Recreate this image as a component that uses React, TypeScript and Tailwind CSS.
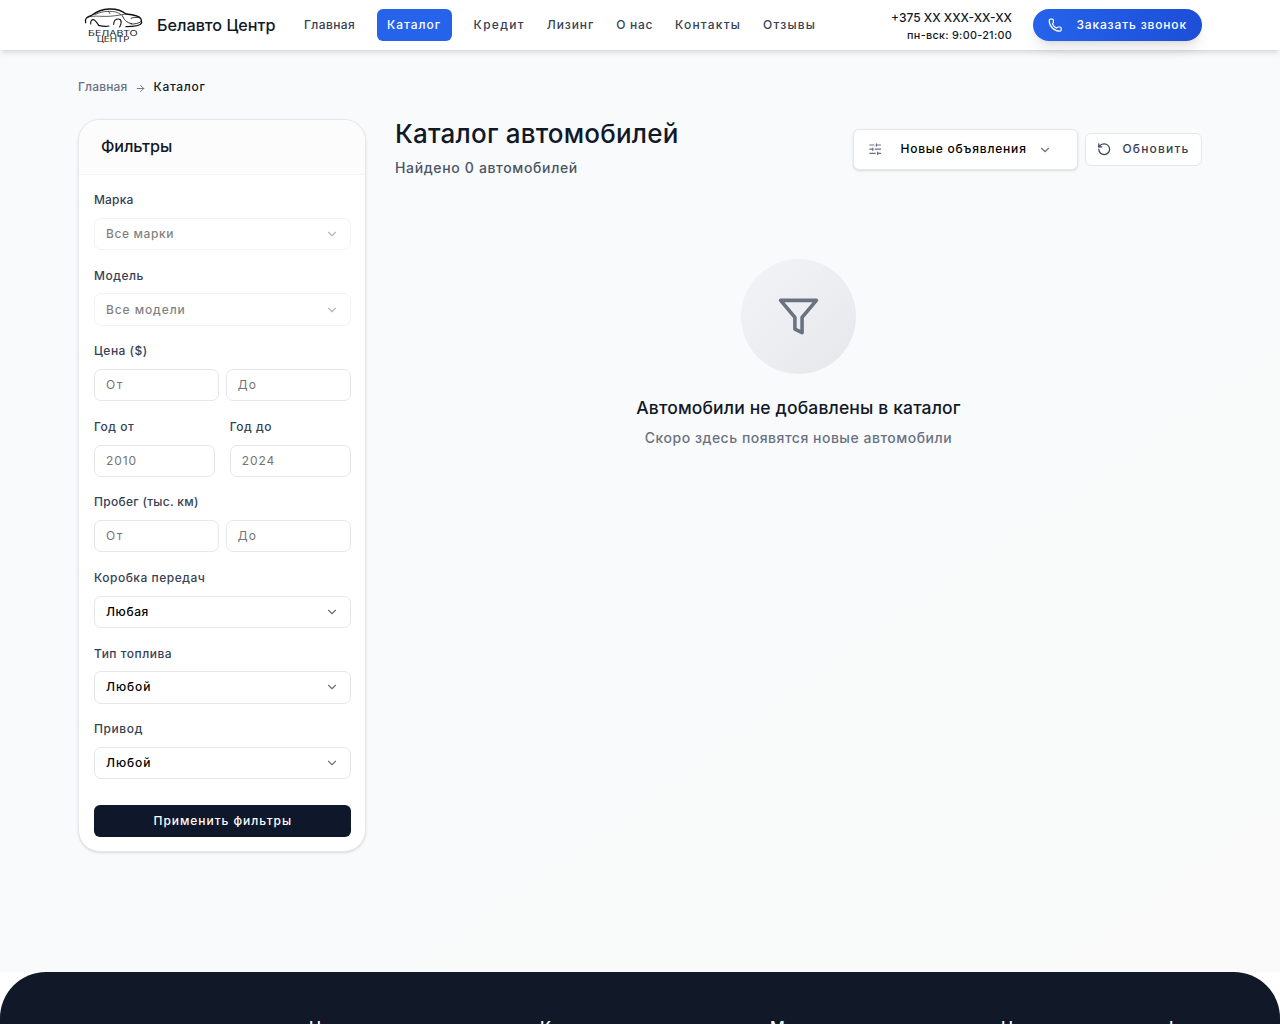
import type { ReactNode } from "react";
import { ArrowRight, ChevronDown, Phone, RotateCcw, SlidersHorizontal } from "lucide-react";

function T({ children, className = "" }: { children: ReactNode; className?: string }) {
  return <span className={"inline-block whitespace-nowrap " + className}>{children}</span>;
}

function Logo() {
  return (
    <svg viewBox="40 20 180 110" className="h-[36.67px] w-[60px] shrink-0" fill="none" stroke="#111" strokeLinecap="round">
      <path d="M48 67C44 56 52 49 66 45C82 33 97 27 118 26C142 25 157 31 169 41C190 43 210 46 214 56L216 68C212 76 198 79 169 79" strokeWidth="4" />
      <path d="M76 43C90 36 102 33 116 33C134 32 146 36 154 43M116 33L121 40" strokeWidth="2" />
      <path d="M52 51C79 43 98 52 138 46C153 44 162 42 169 41" strokeWidth="2" />
      <path d="M86 75C98 78 108 79 118 77M63 71C62 61 67 56 74 59C80 63 82 69 88 75M132 72C132 61 139 55 147 56C157 57 156 70 150 80" strokeWidth="3.4" />
      <path d="M184 54C190 51 200 50 208 52M184 71C195 72 206 69 214 64M158 46C163 58 170 67 186 70" strokeWidth="2.6" />
      <g fill="#222" stroke="none" fontFamily="Inter" fontSize="22">
        <text x="55" y="106" textLength="149" lengthAdjust="spacingAndGlyphs">БЕЛАВТО</text>
        <text x="81" y="126" textLength="99" lengthAdjust="spacingAndGlyphs">ЦЕНТР</text>
      </g>
    </svg>
  );
}

const label = "mb-[8.7px] flex h-[19.5px] items-end text-[12px] font-medium leading-[18px] text-gray-700";
const box = "flex h-[32.4px] min-w-0 flex-1 items-center rounded-[7px] border border-gray-200 bg-white px-[11px] text-[12px]";

function Select({ title, value, disabled = false }: { title: ReactNode; value: ReactNode; disabled?: boolean }) {
  return (
    <div>
      <div className={label}>{title}</div>
      <div className={box + " justify-between font-medium text-black" + (disabled ? " opacity-50" : "")}>
        {value}
        <ChevronDown size={14} className="text-gray-500" />
      </div>
    </div>
  );
}

function Input({ children }: { children: ReactNode }) {
  return <div className={box + " text-[#757575]"}>{children}</div>;
}

function Range() {
  return (
    <div className="flex gap-[7px]">
      <Input><T className="tracking-[1.6px]">От</T></Input>
      <Input><T className="tracking-[1px]">До</T></Input>
    </div>
  );
}

export default function App() {
  return (
    <div className="flex h-[1024px] flex-col overflow-hidden bg-white font-['Inter',sans-serif] text-[#111827]">
      <header className="relative z-10 flex h-[50px] shrink-0 items-center bg-white pl-[83px] pr-[78px] shadow-md">
        <Logo />
        <div className="ml-[14px] w-[133px] text-[16.2px] font-medium"><T>Белавто Центр</T></div>
        <nav className="flex flex-1 items-center pb-px text-[12px] font-medium text-gray-700">
          <div className="w-[87px] pl-[14px]"><T className="tracking-[0.4px]">Главная</T></div>
          <div className="-mb-px flex h-8 w-[75px] items-center rounded-md bg-[#2563eb] pb-px pl-[10px] text-white"><T className="tracking-[1px]">Каталог</T></div>
          <div className="ml-[21.6px] flex gap-[22px]">
            <T className="tracking-[1.3px]">Кредит</T>
            <T className="tracking-[0.9px]">Лизинг</T>
            <T className="tracking-[0.7px]">О нас</T>
            <T className="tracking-[1.2px]">Контакты</T>
            <T className="tracking-[1.2px]">Отзывы</T>
          </div>
        </nav>
        <div className="mr-[21px] flex flex-col items-end pt-[3px] font-medium">
          <T className="text-[12px] leading-[18px]">+375 XX XXX-XX-XX</T>
          <T className="text-[10.8px] leading-[18px] tracking-[0.3px]">пн-вск: 9:00-21:00</T>
        </div>
        <div className="flex h-8 w-[169px] items-center gap-[14px] rounded-full bg-linear-to-r/srgb from-[#2563eb] to-[#1d4ed8] pl-[15px] text-[12px] font-medium text-white shadow-lg">
          <Phone size={14.4} className="shrink-0" /><T className="pb-px tracking-[0.85px]">Заказать звонок</T>
        </div>
      </header>
      <main className="h-[922px] shrink-0 bg-linear-to-br/srgb from-[#f8fafc] to-[#fafafa] px-[78px] pt-[28px]">
        <div className="flex h-[18px] items-center text-[12px] font-medium">
          <T className="tracking-[0.15px] text-gray-500">Главная</T>
          <ArrowRight size={11} className="ml-2 mr-[7px] mt-[2px] text-gray-500" />
          <T className="tracking-[0.7px]">Каталог</T>
        </div>
        <div className="mt-[23px] flex gap-[29px]">
          <aside className="w-[288px] shrink-0 rounded-[22px] border border-gray-200 bg-white shadow-sm">
            <div className="flex h-[55px] items-center rounded-t-[21px] border-b border-gray-100 bg-[#fcfcfd] px-[22px] pb-[2px] text-[16.2px] font-medium"><T className="-tracking-[0.1px]">Фильтры</T></div>
            <div className="flex flex-col gap-[15px] pb-[13.6px] pl-[15px] pr-[14.4px] pt-[14.6px]">
              <Select title={<T className="tracking-[0.15px]">Марка</T>} value={<T className="tracking-[0.6px]">Все марки</T>} disabled />
              <Select title={<T className="tracking-[0.5px]">Модель</T>} value={<T className="tracking-[0.9px]">Все модели</T>} disabled />
              <div><div className={label}><T className="tracking-[0.5px]">Цена ($)</T></div><Range /></div>
              <div className="flex gap-[15px]">
                <div className="flex-1"><div className={label}><T className="tracking-[0.5px]">Год от</T></div><div className="flex"><Input><T className="tracking-[0.9px]">2010</T></Input></div></div>
                <div className="flex-1"><div className={label}><T className="tracking-[0.5px]">Год до</T></div><div className="flex"><Input><T className="tracking-[0.9px]">2024</T></Input></div></div>
              </div>
              <div><div className={label}><T className="tracking-[0.3px]">Пробег (тыс. км)</T></div><Range /></div>
              <Select title={<T className="tracking-[0.5px]">Коробка передач</T>} value={<T className="tracking-[0.6px]">Любая</T>} />
              <Select title={<T className="tracking-[0.5px]">Тип топлива</T>} value={<T className="tracking-[0.9px]">Любой</T>} />
              <Select title={<T className="tracking-[0.6px]">Привод</T>} value={<T className="tracking-[0.9px]">Любой</T>} />
              <div className="mt-[10.4px] flex h-[32.4px] items-center justify-center rounded-md bg-[#0f172a] text-[12px] font-medium text-white"><T className="pl-px tracking-[0.95px]">Применить фильтры</T></div>
            </div>
          </aside>
          <section className="min-w-0 flex-1">
            <div className="flex h-[61px] items-center justify-between">
              <div>
                <h1 className="text-[26px] font-medium leading-[28px]"><T className="tracking-[0.2px]">Каталог автомобилей</T></h1>
                <p className="mt-[9px] text-[14px] font-medium leading-[22px] text-gray-600"><T className="tracking-[0.65px]">Найдено 0 автомобилей</T></p>
              </div>
              <div className="flex items-center gap-[7px] text-[12px] font-medium">
                <div className="flex h-[41px] w-[225px] items-center rounded-md border border-gray-200 bg-white pl-[14px] text-black shadow-sm">
                  <SlidersHorizontal size={14.4} className="mr-[18px] text-gray-500" /><T className="pb-px tracking-[0.8px]">Новые объявления</T><ChevronDown size={14} className="ml-[11px] text-gray-500" />
                </div>
                <div className="flex h-[33px] w-[117px] items-center rounded-md border border-gray-200 bg-white pl-[11px] text-gray-700">
                  <RotateCcw size={14.4} className="mr-[11px]" /><T className="pb-px tracking-[1.2px]">Обновить</T>
                </div>
              </div>
            </div>
            <div className="mt-[79px] flex flex-col items-center">
              <div className="flex size-[115px] items-center justify-center rounded-full bg-linear-to-br/srgb from-gray-100 to-gray-200">
                <svg viewBox="0 0 24 24" className="size-[43px] text-gray-500" fill="none" stroke="currentColor" strokeWidth="2" strokeLinecap="round" strokeLinejoin="round"><path d="M22 3H2L10 12.46V19L14 21V12.46Z" /></svg>
              </div>
              <h2 className="mt-[21px] text-[17.5px] font-medium leading-[26px]"><T className="tracking-[0.15px]">Автомобили не добавлены в каталог</T></h2>
              <p className="mt-[6px] text-[14px] font-medium leading-[22px] text-gray-500"><T className="tracking-[0.5px]">Скоро здесь появятся новые автомобили</T></p>
            </div>
          </section>
        </div>
      </main>
      <footer className="h-[100px] shrink-0 rounded-t-[46px] bg-[#111827] pl-[309px] pt-[43px] text-[16.2px] font-medium text-white">
        <div className="flex"><span className="w-[231px]">Н</span><span className="w-[230px]">К</span><span className="w-[231px]">М</span><span className="w-[168px]">Н</span><span>І</span></div>
      </footer>
    </div>
  );
}
